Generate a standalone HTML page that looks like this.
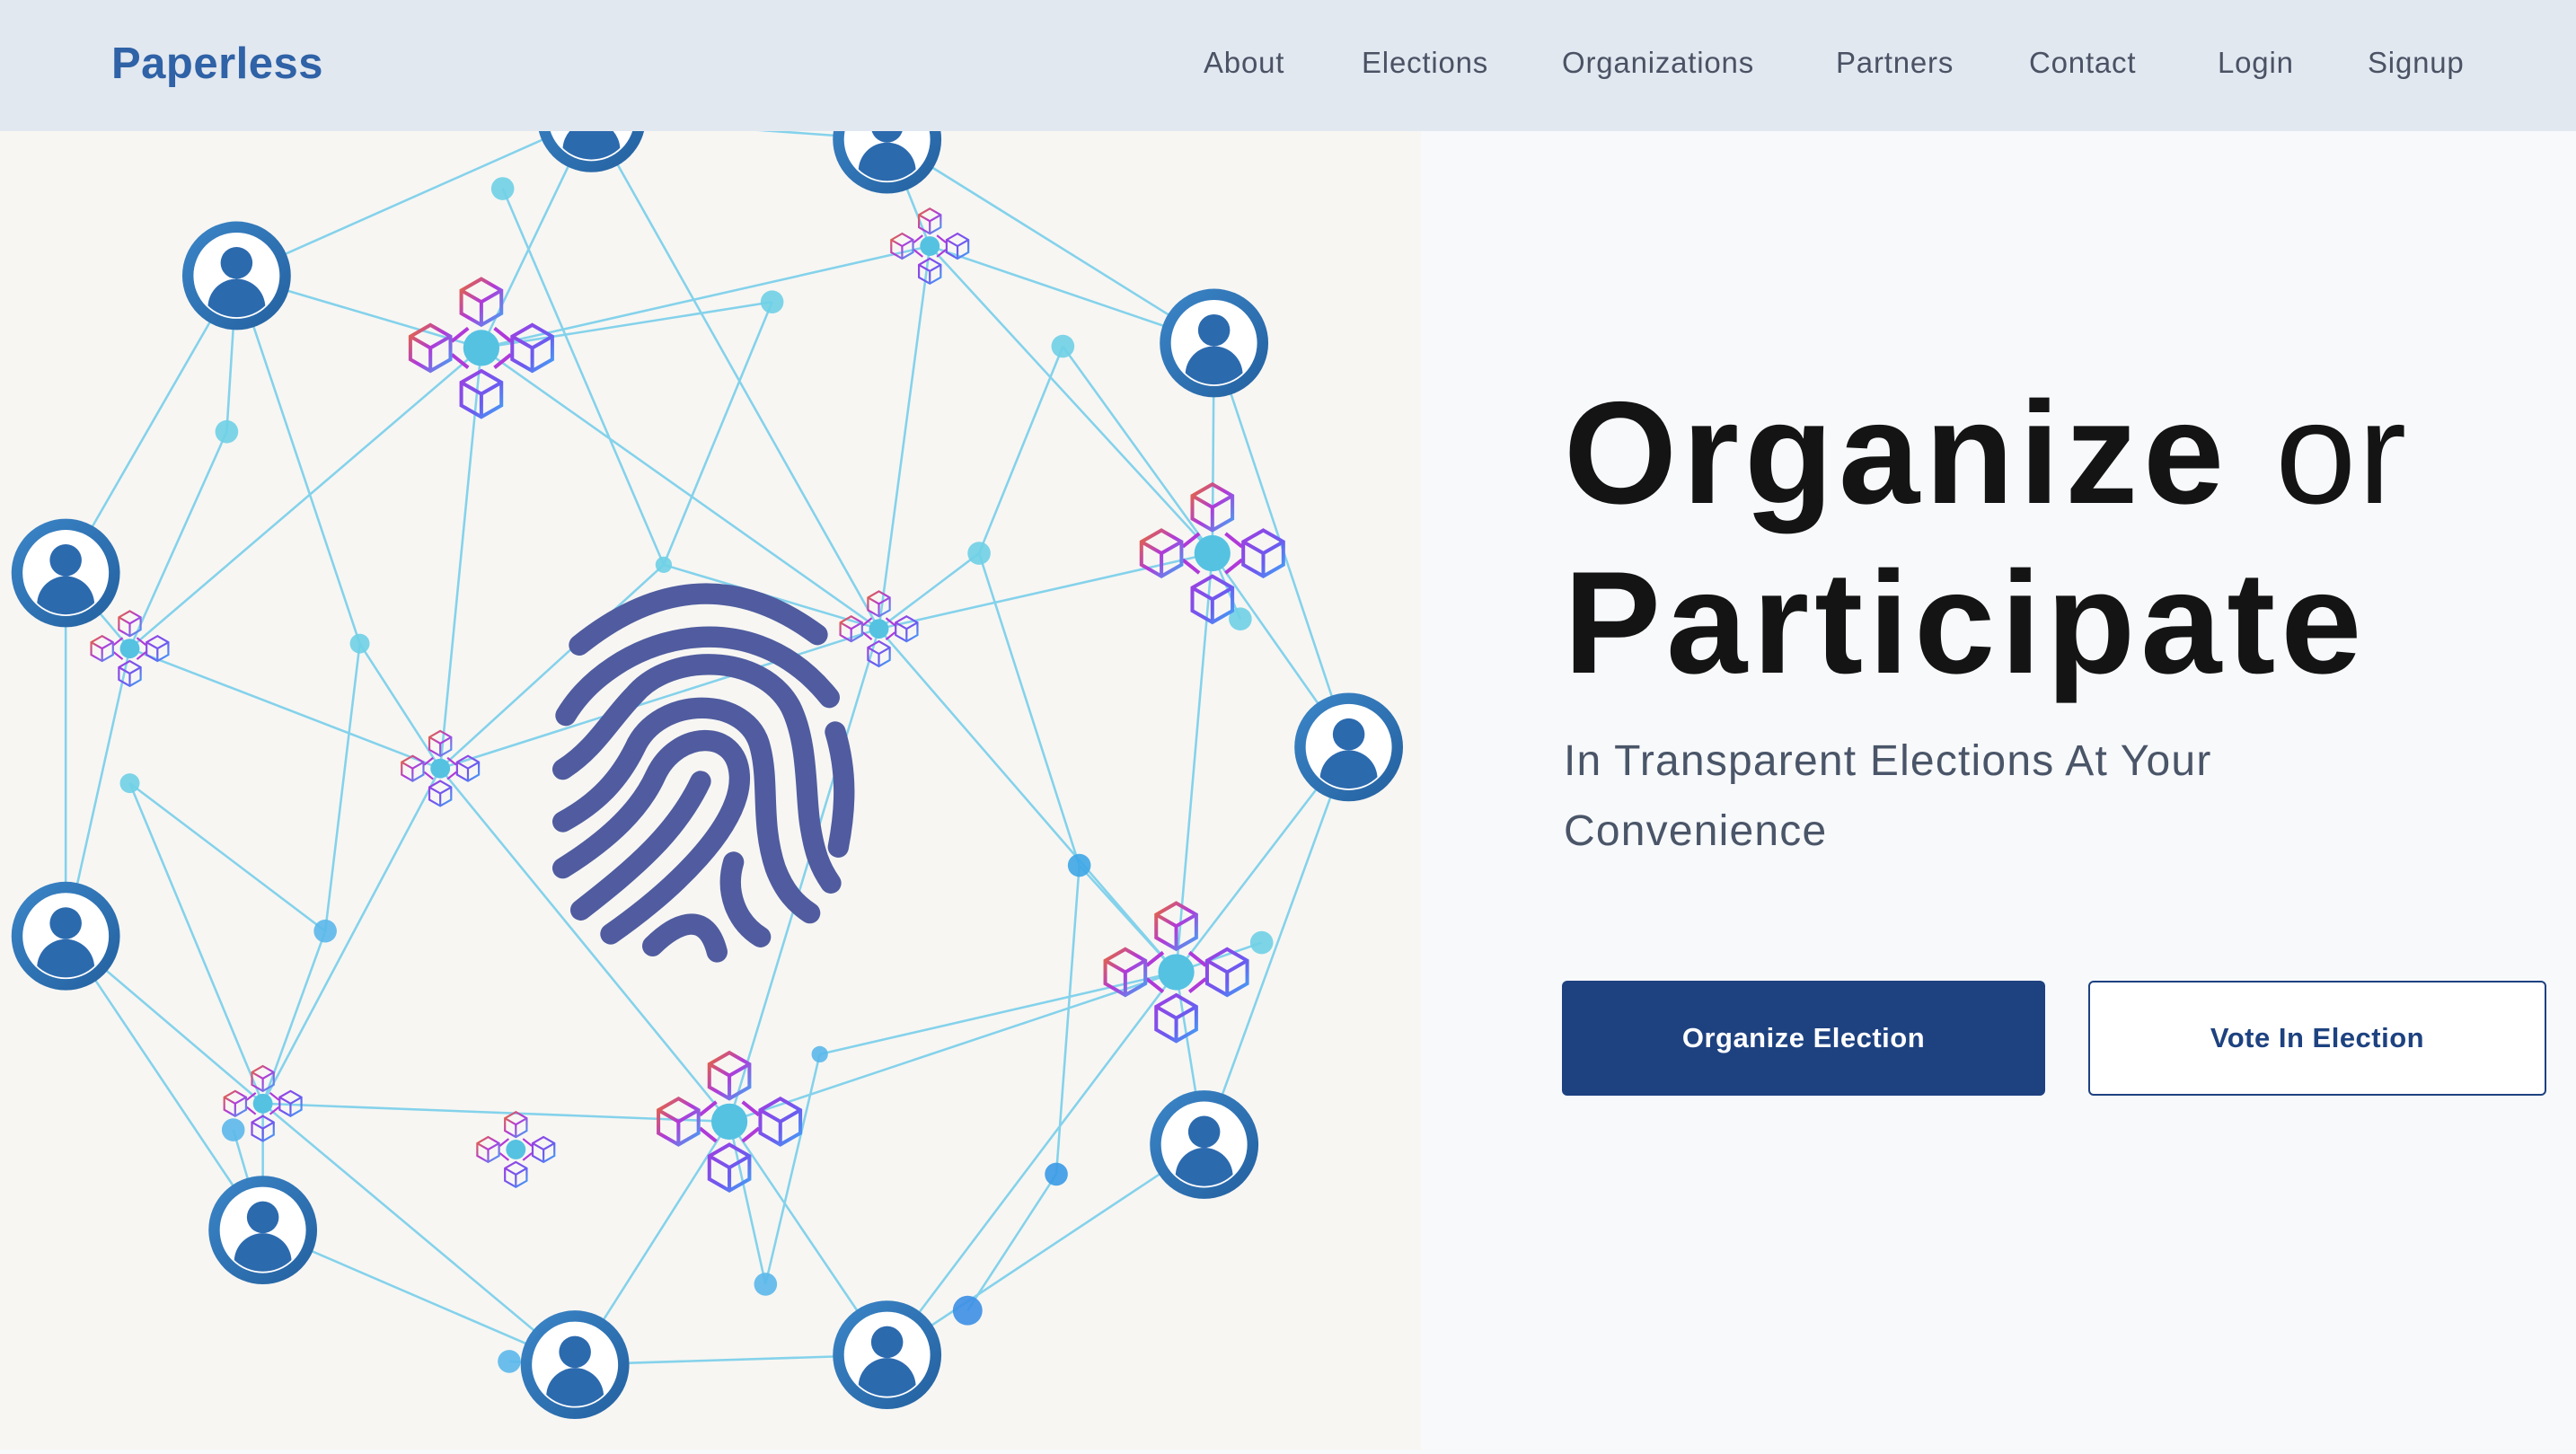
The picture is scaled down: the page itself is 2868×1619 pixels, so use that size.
<!DOCTYPE html>
<html><head><meta charset="utf-8"><style>
*{margin:0;padding:0;box-sizing:border-box}
body{width:2868px;height:1614px;overflow:hidden;background:#f7f9fb;font-family:"Liberation Sans",sans-serif;position:relative}
.nav{position:absolute;left:0;top:0;width:2868px;height:146px;background:#e2e8f0;z-index:2}
.logo{position:absolute;left:124px;top:43px;font-size:49px;font-weight:bold;color:#2f62a6;letter-spacing:0.5px}
.nav a{position:absolute;top:51px;font-size:33px;color:#4a5264;text-decoration:none;letter-spacing:0.8px}
.art{position:absolute;left:0;top:146px;width:1582px;height:1468px;background:#f7f6f3}
h1{position:absolute;left:1741px;top:0;font-weight:bold;color:#141414;font-size:162px;letter-spacing:6px;line-height:1}
.sub{position:absolute;left:1741px;top:809px;font-size:48px;line-height:78px;color:#4a5568;letter-spacing:1.2px;width:900px}
.btn{position:absolute;top:1092px;height:128px;border-radius:6px;font-size:31px;font-weight:bold;display:flex;align-items:center;justify-content:center;letter-spacing:0.5px}
</style></head><body>
<div class="nav">
<div class="logo">Paperless</div>
<a style="left:1340px">About</a>
<a style="left:1516px">Elections</a>
<a style="left:1739px">Organizations</a>
<a style="left:2044px">Partners</a>
<a style="left:2259px">Contact</a>
<a style="left:2469px">Login</a>
<a style="left:2636px">Signup</a>
</div>
<div class="art">
<svg width="1582" height="1468" viewBox="0 0 1582 1468">
<defs>
<linearGradient id="cg" x1="0" y1="0" x2="1" y2="1"><stop offset="0" stop-color="#ea6a32"/><stop offset=".5" stop-color="#b03ad8"/><stop offset="1" stop-color="#3fa9f5"/></linearGradient>
<linearGradient id="cg2" x1="0" y1="0" x2="1" y2="1"><stop offset="0" stop-color="#a03ee0"/><stop offset=".6" stop-color="#6a5cf0"/><stop offset="1" stop-color="#3fa9f5"/></linearGradient>
<linearGradient id="pg" x1="0" y1="0" x2="1" y2="1"><stop offset="0" stop-color="#3b86c8"/><stop offset="1" stop-color="#24609f"/></linearGradient>
<clipPath id="pc"><circle r="26"/></clipPath>
<symbol id="p" viewBox="-35 -35 70 70" overflow="visible">
<circle r="34" fill="url(#pg)"/><circle r="27" fill="#fff"/>
<g clip-path="url(#pc)" fill="#2c6aae"><circle cy="-8" r="10"/><ellipse cy="20" rx="18" ry="18"/></g>
</symbol>
<path id="cube" fill="none" stroke-width="2.2" d="M0,-14L12.2,-7L12.2,7L0,14L-12.2,7L-12.2,-7Z M-12.2,-7L0,0L12.2,-7 M0,0L0,14"/>
<symbol id="b" viewBox="-46 -46 92 92" overflow="visible">
<path d="M-8,-12L-18,-4M8,-12L18,-4M-8,12L-18,4M8,12L18,4" stroke="#b03ad8" stroke-width="2.2"/>
<circle r="11" fill="#55c2e2"/>
<use href="#cube" stroke="url(#cg)" transform="translate(0,-28)"/><use href="#cube" stroke="url(#cg)" transform="translate(-31,0)"/>
<use href="#cube" stroke="url(#cg2)" transform="translate(31,0)"/><use href="#cube" stroke="url(#cg2)" transform="translate(0,28)"/>
</symbol>
</defs>
<g transform="scale(1.829) translate(0,-80)">
<g stroke="#5ec5e8" stroke-width="1.4" opacity=".75" fill="none">
<path d="M144,168L293,212M144,168L360,72M360,72L540,85M540,85L566,150M360,72L293,212M293,212L566,150M566,150L739,209M739,209L738,337M293,212L79,395M293,212L268,468M293,212L535,383M566,150L535,383M535,383L738,337M738,337L821,455M821,455L716,592M716,592L733,697M733,697L540,825M540,825L350,831M350,831L160,749M160,749L160,672M160,672L40,570M40,570L40,349M40,349L144,168M40,349L79,395M79,395L268,468M268,468L444,683M268,468L160,672M160,672L444,683M444,683L716,592M444,683L540,825M444,683L350,831M535,383L716,592M79,395L40,570M160,672L350,831M716,592L540,825M738,337L716,592M566,150L738,337M360,72L535,383M535,383L268,468M444,683L535,383M144,168L138,263L79,395M306,115L404,344L535,383M470,184L293,212M647,211L738,337M596,337L535,383M755,377L738,337M219,392L268,468M79,477L160,672M657,527L716,592M768,574L716,592M198,567L160,672M499,642L716,592M643,715L589,798M466,782L444,683M142,688L160,749M310,829L350,831M821,455L733,697M40,570L160,749M739,209L821,455M540,85L739,209M144,168L219,392L198,567L160,672M404,344L268,468M596,337L657,527L643,715M470,184L404,344M647,211L596,337M79,477L198,567M499,642L466,782"/>
</g>
<g fill="#6fd0e6" opacity=".9">
<circle cx="306" cy="115" r="7"/><circle cx="470" cy="184" r="7"/><circle cx="647" cy="211" r="7"/><circle cx="138" cy="263" r="7"/><circle cx="404" cy="344" r="5"/><circle cx="596" cy="337" r="7"/><circle cx="755" cy="377" r="7"/><circle cx="219" cy="392" r="6"/><circle cx="79" cy="477" r="6"/><circle cx="657" cy="527" r="7" fill="#3ea6e6"/><circle cx="768" cy="574" r="7"/><circle cx="198" cy="567" r="7" fill="#5bb8ea"/><circle cx="499" cy="642" r="5" fill="#5bb8ea"/><circle cx="643" cy="715" r="7" fill="#3a9ae6"/><circle cx="466" cy="782" r="7" fill="#5bb8ea"/><circle cx="589" cy="798" r="9" fill="#3c8fe6"/><circle cx="310" cy="829" r="7" fill="#5bb8ea"/><circle cx="142" cy="688" r="7" fill="#5bb8ea"/>
</g>
<use href="#b" x="247" y="166" width="92" height="92"/>
<use href="#b" x="692" y="291" width="92" height="92"/>
<use href="#b" x="670" y="546" width="92" height="92"/>
<use href="#b" x="398" y="637" width="92" height="92"/>
<use href="#b" x="541" y="125" width="50" height="50"/>
<use href="#b" x="54" y="370" width="50" height="50"/>
<use href="#b" x="510" y="358" width="50" height="50"/>
<use href="#b" x="243" y="443" width="50" height="50"/>
<use href="#b" x="135" y="647" width="50" height="50"/>
<use href="#b" x="289" y="675" width="50" height="50"/>
<use href="#p" x="326" y="38" width="68" height="68"/>
<use href="#p" x="506" y="51" width="68" height="68"/>
<use href="#p" x="110" y="134" width="68" height="68"/>
<use href="#p" x="705" y="175" width="68" height="68"/>
<use href="#p" x="6" y="315" width="68" height="68"/>
<use href="#p" x="787" y="421" width="68" height="68"/>
<use href="#p" x="6" y="536" width="68" height="68"/>
<use href="#p" x="699" y="663" width="68" height="68"/>
<use href="#p" x="126" y="715" width="68" height="68"/>
<use href="#p" x="316" y="797" width="68" height="68"/>
<use href="#p" x="506" y="791" width="68" height="68"/>
</g>
<g transform="translate(580,454) scale(0.3333)" fill="none" stroke="#505c9f" stroke-width="70" stroke-linecap="round">
<path d="M195,355Q600,30 990,320"/>
<path d="M150,590C300,340 750,180 1030,530"/>
<path d="M140,770C250,700 300,600 380,520C500,380 800,380 900,560C960,680 950,850 965,950C980,1050 1000,1100 1035,1150"/>
<path d="M1050,645C1090,780 1085,900 1060,1030"/>
<path d="M140,945C260,880 330,800 380,700C460,520 760,520 800,700C830,820 800,950 850,1100C880,1180 920,1220 965,1250"/>
<path d="M140,1100C300,1000 400,900 450,790C520,640 720,630 730,790C740,960 500,1180 300,1320"/>
<path d="M200,1240C380,1100 520,980 600,810"/>
<path d="M440,1360C520,1280 620,1240 655,1380"/>
<path d="M710,1080C680,1180 720,1280 800,1330"/>
</g>
</svg>
</div>
<h1 style="top:424px">Organize <span style="font-weight:normal;letter-spacing:2px">or</span></h1>
<h1 style="top:613px">Participate</h1>
<div class="sub">In Transparent Elections At Your Convenience</div>
<div class="btn" style="left:1739px;width:538px;background:#1e4280;color:#fff">Organize Election</div>
<div class="btn" style="left:2325px;width:510px;border:2px solid #1e4280;color:#1e4280;background:#fff">Vote In Election</div>
</body></html>
